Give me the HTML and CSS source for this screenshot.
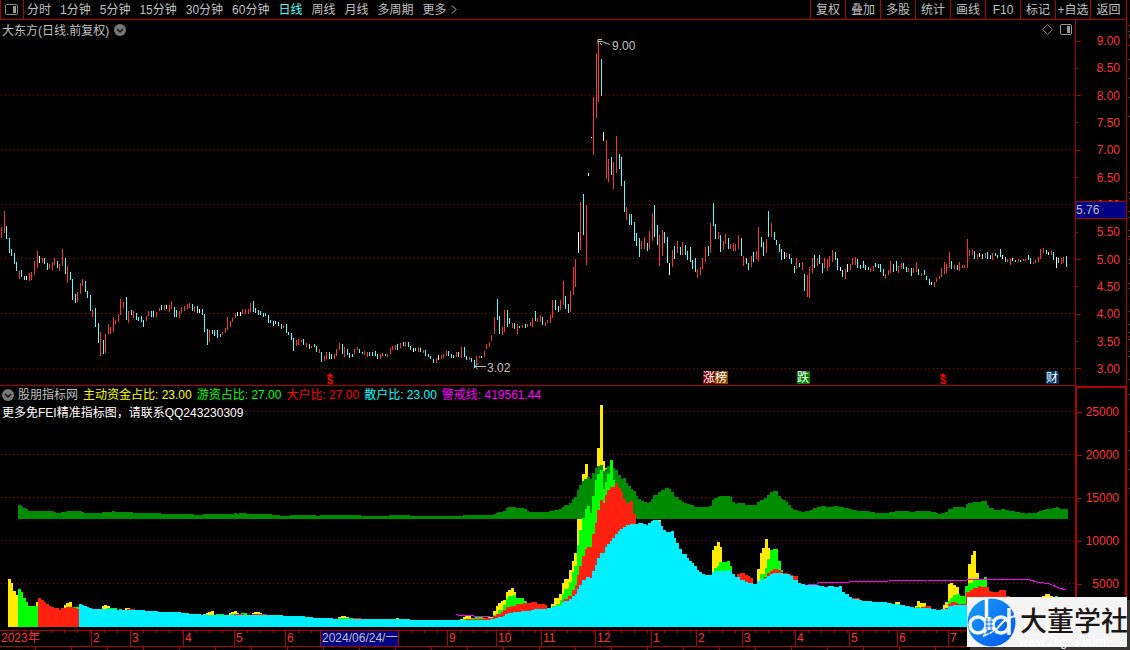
FILE: index.html
```html
<!DOCTYPE html>
<html lang="zh-CN">
<head>
<meta charset="UTF-8" />
<meta name="viewport" content="width=device-width, initial-scale=1" />
<title>大东方 日线</title>
<link rel="stylesheet" href="styles.css">
</head>
<body>

<div class="terminal">
  <header class="toolbar">
    <button class="panel-btn" aria-label="侧栏">
      <svg width="13" height="11" viewBox="0 0 13 11"><rect x=".5" y=".5" width="12" height="10" rx="1.5" fill="none" stroke="#888"/><path d="M8 2h3v7H8z" fill="#999"/></svg>
    </button>
    <nav class="periods">
      <button>分时</button>
      <button>1分钟</button>
      <button>5分钟</button>
      <button>15分钟</button>
      <button>30分钟</button>
      <button>60分钟</button>
      <button class="active">日线</button>
      <button>周线</button>
      <button>月线</button>
      <button>多周期</button>
      <button class="more">更多<svg width="6" height="9" viewBox="0 0 6 9"><path d="M1 .5l4 4-4 4" fill="none" stroke="#c0c0c0"/></svg></button>
    </nav>
    <div class="actions">
      <button>复权</button>
      <button>叠加</button>
      <button>多股</button>
      <button>统计</button>
      <button>画线</button>
      <button>F10</button>
      <button>标记</button>
      <button>+自选</button>
      <button>返回</button>
    </div>
  </header>

  <!-- price chart -->
  <section class="pane price">
    <svg id="price" class="plot" viewBox="0 20 1075 365" preserveAspectRatio="none"></svg>
    <div class="pane-head">
      <h1>大东方(日线.前复权)</h1>
      <button class="round" aria-label="展开"><svg width="12" height="12" viewBox="0 0 12 12"><circle cx="6" cy="6" r="6" fill="#777"/><path d="M3 5l3 3 3-3" fill="none" stroke="#111" stroke-width="1.5"/></svg></button>
      <span class="tools">
        <svg width="11" height="11" viewBox="0 0 11 11"><path d="M5.5.5l5 5-5 5-5-5z" fill="none" stroke="#888"/></svg>
        <svg width="12" height="11" viewBox="0 0 12 11"><rect x=".5" y=".5" width="11" height="10" rx="1.5" fill="none" stroke="#999"/><path d="M7 2h3v7H7z" fill="#999"/></svg>
      </span>
    </div>
  </section>
  <aside class="axis price-axis">
    <span>9.00</span>
    <span>8.50</span>
    <span>8.00</span>
    <span>7.50</span>
    <span>7.00</span>
    <span>6.50</span>
    <span>6.00</span>
    <span>5.50</span>
    <span>5.00</span>
    <span>4.50</span>
    <span>4.00</span>
    <span>3.50</span>
    <span>3.00</span>
    <b class="cursor-price">5.76</b>
  </aside>

  <!-- indicator -->
  <section class="pane volume">
    <svg id="volume" class="plot" viewBox="0 386 1075 244" preserveAspectRatio="none"></svg>
    <div class="pane-head legend">
      <p>
        <button class="round" aria-label="指标"><svg width="12" height="12" viewBox="0 0 12 12"><circle cx="6" cy="6" r="6" fill="#777"/><path d="M3 5l3 3 3-3" fill="none" stroke="#111" stroke-width="1.5"/></svg></button>
        <span>股朋指标网</span>
        <span class="yellow">主动资金占比: 23.00</span>
        <span class="lime">游资占比: 27.00</span>
        <span class="red">大户比: 27.00</span>
        <span class="cyan">散户比: 23.00</span>
        <span class="magenta">警戒线: 419561.44</span>
      </p>
      <p class="note">更多免FEI精准指标图，请联系QQ243230309</p>
    </div>
  </section>
  <aside class="axis volume-axis">
    <span>25000</span>
    <span>20000</span>
    <span>15000</span>
    <span>10000</span>
    <span>5000</span>
  </aside>

  <footer class="dates">
    <span>2023年</span>
    <span>2</span>
    <span>3</span>
    <span>4</span>
    <span>5</span>
    <span>6</span>
    <span class="cursor-date">2024/06/24/一</span>
    <span></span>
    <span>9</span>
    <span>10</span>
    <span>11</span>
    <span>12</span>
    <span>1</span>
    <span>2</span>
    <span>3</span>
    <span>4</span>
    <span>5</span>
    <span>6</span>
    <span>7</span>
    <span></span>
  </footer>

  <svg class="strip" viewBox="0 0 4 650" preserveAspectRatio="none" shape-rendering="crispEdges">
    <path d="M1 25.5h3M1 45.5h3M1 239.5h3M1 336.5h3" stroke="#b00000"/>
    <path d="M3.5 31v1m0 3v1m0 1v1m0 21v1m0 18v1m0 18v1m0 18v1m0 75v1m0 5v1m0 12v1m0 5v1m0 12v1m0 5v1m0 22v1m0 3v1m0 19v1m0 4v1m0 22v1m0 12v1m0 7v1m0 6v1m0 11v1m0 4v1m0 22v1m0 14v1m0 36v1m0 18v1m0 18v1m0 18v1" stroke="#aaa"/>
  </svg>

  <div class="below"></div>

  <div class="brand">
    <svg width="49" height="49" viewBox="0 0 49 49">
      <defs><linearGradient id="blue" x1="0" y1="0" x2="1" y2="1"><stop offset="0" stop-color="#1aa0f5"/><stop offset="1" stop-color="#0055f0"/></linearGradient></defs>
      <circle cx="24.500" cy="24.500" r="24" fill="url(#blue)"/>
      <g fill="none" stroke="#f4f8ff" stroke-width="3.500">
        <circle cx="11" cy="27" r="8"/>
        <path d="M19.500 1v26c0 4-1 6-3 8"/>
        <circle cx="34" cy="27" r="8"/>
        <path d="M42 10v27"/>
        <path d="M16 38c8-3 13-5 18-12 3-4 7-6 14-8" stroke-width="2"/>
        <path d="M20 39l8-6" stroke="#1674ef" stroke-width="1"/>
      </g>
      <path d="M18 24q0-5 4-5t4 5v8h-8z" fill="#f4f8ff"/>
      <path d="M18 24h8m-8 4h8m-6-8v12m4-12v12M22 32v7m-3-1h6" stroke="#1674ef"/>
    </svg>
    <strong>大董学社</strong>
    <i>www.zbgs3.com</i>
  </div>
</div>

<script src="chart.js"></script>
</body>
</html>
```
FILE: styles.css
```css
* {
  box-sizing: border-box;
}

body {
  margin: 0;
  background: #000;
  color: #c0c0c0;
  font-family: 'Liberation Sans', 'Noto Sans CJK SC', sans-serif;
  font-size: 12px;
}

button {
  background: none;
  border: none;
  padding: 0;
  color: inherit;
  font: inherit;
  white-space: nowrap;
  cursor: pointer;
}

svg {
  display: block;
}

h1, p {
  margin: 0;
  font-size: inherit;
  font-weight: normal;
}

.terminal {
  position: relative;
  display: grid;
  grid-template-columns: 1fr 51px 4px;
  grid-template-rows: 20px 366fr 245fr 16px 3px;
  height: 100vh;
  overflow: hidden;
}

/* toolbar */
.toolbar {
  grid-column: 1 / 3;
  display: flex;
  border-bottom: 1px solid #b00000;
  line-height: 18px;
}

.panel-btn {
  width: 24px;
  padding-left: 4px;
  border-left: 1px solid #b00000;
  border-right: 1px solid #b00000;
}

.periods {
  flex: 1;
  display: flex;
  gap: 9px;
  padding-left: 3px;
}

.periods .active {
  color: #54ffff;
}

.more {
  display: flex;
  align-items: center;
  gap: 4px;
}

.actions {
  display: flex;
}

.actions button {
  width: 35px;
  border-left: 1px solid #b00000;
}

.actions button:last-child {
  width: 36px;
}

/* panes */
.pane {
  position: relative;
  min-height: 0;
  border-bottom: 1px solid #b00000;
}

.plot {
  position: absolute;
  inset: 0;
  width: 100%;
  height: 100%;
}

.pane-head {
  position: relative;
  display: flex;
  align-items: center;
  gap: 5px;
  padding: 0 3px 0 2px;
  height: 19px;
}

.tools {
  display: flex;
  align-items: center;
  gap: 7px;
  margin-left: auto;
}

.legend {
  flex-direction: column;
  align-items: flex-start;
  gap: 0;
  height: auto;
  line-height: 18px;
}

.legend p {
  display: flex;
  align-items: center;
  gap: 5px;
  white-space: nowrap;
}

.legend .round {
  margin-right: -1px;
}

.legend .note {
  color: #fff;
}

.yellow { color: #ff0; }
.lime { color: #0f0; }
.red { color: #f00; }
.cyan { color: #0ff; }
.magenta { color: #f0f; }

/* value axes */
.axis {
  position: relative;
  display: flex;
  flex-direction: column;
  justify-content: space-between;
  border-left: 1px solid #b00000;
  color: #ff3232;
  line-height: 16px;
}

.axis span {
  display: flex;
  align-items: center;
  justify-content: space-between;
  padding-right: 6px;
}

.axis span::before {
  content: "";
  width: 5px;
  height: 1px;
  background: #b00000;
}

.price-axis {
  padding: 13px 0 9px;
}

.price-axis span:nth-child(even)::before {
  width: 2px;
}

.cursor-price {
  position: absolute;
  top: 49.500%;
  left: 0;
  right: 0;
  background: #000080;
  border-top: 1px solid #b00000;
  border-bottom: 1px solid #b00000;
  color: #c0c0c0;
  font-weight: normal;
}

.volume-axis {
  padding: 16px 0 38px;
  border: 2px solid #b00000;
  border-right-width: 1px;
  border-bottom-width: 1px;
}

/* dates */
.dates {
  grid-column: 1 / 3;
  display: grid;
  grid-template-columns: 92fr 39fr 53fr 51fr 51fr 35fr 78fr 49fr 49fr 45fr 54fr 56fr 45fr 46fr 53fr 54fr 48fr 51fr 51fr 126fr;
  border-bottom: 1px solid #b00000;
  color: #ff3232;
  line-height: 15px;
}

.dates span {
  padding-left: 1px;
  border-right: 1px solid #b00000;
  background: repeating-linear-gradient(90deg, transparent 0 12px, #b00000 12px 13px) 0 0 / 100% 2px no-repeat;
  white-space: nowrap;
  overflow: hidden;
}

.dates .cursor-date {
  background: #000080;
  color: #c0c0c0;
}

.strip {
  grid-area: 1 / 3 / 6 / 4;
  width: 100%;
  height: 100%;
  border-left: 1px solid #b00000;
}

.below {
  grid-column: 1 / 3;
  background: repeating-linear-gradient(90deg, transparent 0 35px, #b00000 35px 36px);
}

/* corner logo */
.brand {
  position: absolute;
  right: 3px;
  bottom: 3px;
  display: flex;
  align-items: center;
  gap: 4px;
  width: 160px;
  height: 50px;
  background: #f4f4f4;
  box-shadow: 3px 3px #383434;
  color: #1c1616;
}

.brand svg {
  flex: none;
}

.brand strong {
  font-size: 27px;
  font-weight: 500;
  line-height: 28px;
  white-space: nowrap;
}

.brand i {
  position: absolute;
  left: 52px;
  bottom: 0;
  color: #fff;
  font-size: 12px;
  font-style: normal;
  line-height: 10px;
}
```
FILE: chart.js
```js
const NS = 'http://www.w3.org/2000/svg';
const priceSvg = document.getElementById('price');
const volumeSvg = document.getElementById('volume');

function add(parent, tag, attrs, text) {
  const el = document.createElementNS(NS, tag);
  for (const key in attrs) el.setAttribute(key, attrs[key]);
  if (text) el.textContent = text;
  parent.appendChild(el);
}

function grid(svg, rows) {
  rows.forEach(y => add(svg, 'path', {
    d: `M1 ${y + 0.5}H1075`, stroke: '#b00000', 'stroke-dasharray': '1 3', 'shape-rendering': 'crispEdges'
  }));
}

// x, high, low, colour (r up, c down, w flat)
const candles = `
1 227 238 r,4 211 233 r,6 226 239 c,9 238 253 c,11 249 256 c,14 253 264 c,16 262 271 c,19 271 279 r,21 270 277 c,24 276 280 c,
26 276 280 w,29 273 281 r,31 272 280 r,34 261 275 r,37 251 268 r,39 256 263 w,42 258 263 r,44 258 264 c,47 263 270 c,49 264 269 r,
52 262 270 r,54 258 265 r,57 261 268 c,59 264 271 r,62 249 266 r,65 258 274 c,67 266 283 r,70 272 280 c,72 279 300 c,75 294 303 c,
77 292 302 r,80 283 294 r,82 279 286 r,85 281 292 c,87 291 298 c,90 295 311 c,92 310 317 r,95 308 327 c,98 323 343 c,100 332 356 r,
103 340 354 c,105 334 353 r,108 324 334 r,110 327 334 r,113 317 332 r,115 320 324 r,118 314 322 r,120 299 315 r,123 302 308 r,
126 297 320 c,128 311 323 r,131 310 315 c,133 311 318 r,136 313 320 c,138 317 321 c,141 316 322 c,143 320 327 c,146 316 321 r,
148 311 316 r,151 311 317 c,153 311 317 c,156 312 317 r,159 308 311 r,161 305 310 c,164 305 310 r,166 305 309 w,169 305 312 r,
171 301 309 r,174 307 317 c,176 310 317 c,179 311 318 r,181 307 313 r,184 306 311 r,187 304 309 r,189 303 308 r,192 304 311 c,
194 306 312 r,197 306 313 c,199 309 313 w,202 309 315 c,204 314 332 c,207 329 345 c,209 330 342 r,212 330 334 c,214 330 336 c,
217 330 338 c,220 334 337 c,222 332 335 r,225 328 333 r,227 317 330 r,230 321 327 r,232 318 322 r,235 313 318 r,237 312 316 w,
240 312 316 w,242 309 314 r,245 309 314 r,248 309 314 r,250 303 312 r,253 301 312 c,255 308 313 c,258 310 315 c,260 311 315 c,
263 313 317 c,265 313 316 c,268 315 323 c,270 320 323 c,273 321 326 c,275 321 324 c,278 322 326 c,281 324 329 c,283 325 328 r,
286 324 333 c,288 332 335 c,291 333 340 c,293 338 351 c,296 340 346 r,298 339 345 r,301 340 342 r,303 339 345 c,306 343 347 r,
309 344 349 c,311 346 348 r,314 344 347 c,316 346 352 c,319 349 353 r,321 352 362 c,324 356 361 r,326 352 359 r,329 352 359 c,
331 354 359 c,334 354 359 r,336 349 356 r,339 343 350 r,342 344 354 c,344 347 357 r,347 349 355 c,349 353 358 c,352 354 357 c,
354 349 354 r,357 347 350 r,359 349 353 c,362 352 354 c,364 351 355 r,367 352 357 r,369 352 356 c,372 352 356 c,375 351 356 c,
377 354 359 c,380 354 359 r,382 353 356 r,385 354 356 c,387 354 357 r,390 348 354 r,392 346 350 r,395 345 350 r,397 344 350 c,
400 343 348 r,403 342 346 c,405 342 347 r,408 342 347 c,410 346 350 c,413 348 352 w,415 348 351 c,418 347 352 r,420 348 352 c,
423 350 353 r,425 350 356 c,428 354 357 c,430 356 359 c,433 359 363 c,436 358 363 r,438 355 360 w,441 355 359 r,443 354 358 r,
446 351 356 r,448 351 356 c,451 354 358 c,453 355 358 c,456 352 357 r,458 352 357 c,461 347 358 r,464 347 357 c,466 356 360 c,
469 357 360 r,471 358 362 c,474 360 368 c,476 356 365 r,479 356 358 r,481 356 358 w,484 351 357 r,486 344 349 r,489 342 347 r,
491 335 341 r,494 317 334 r,497 299 320 c,499 316 334 c,502 327 335 r,504 310 332 r,507 310 327 c,509 318 324 c,512 323 328 r,
514 323 329 c,517 324 334 r,519 326 328 c,522 325 328 r,525 324 328 c,527 324 327 r,530 322 326 r,532 318 327 r,535 311 321 c,
537 318 322 r,540 315 322 r,542 317 325 c,545 322 326 r,547 320 323 r,550 315 323 r,552 300 318 r,555 300 310 c,558 306 312 c,
560 300 310 r,563 281 305 r,565 296 309 c,568 304 313 c,570 291 312 r,573 267 295 r,575 259 287 r,578 232 253 w,580 202 250 r,
583 194 235 c,586 205 265 r,588 173 176 w,591 137 138 w,593 97 155 r,596 53 118 r,598 43 102 r,601 59 96 c,603 132 141 w,
606 140 179 r,608 159 182 r,611 157 175 c,613 162 189 r,616 136 173 r,619 154 169 c,621 157 186 c,624 181 212 c,626 207 220 r,
629 214 225 c,631 214 225 c,634 222 241 c,636 233 246 c,639 238 257 c,641 241 249 r,644 237 249 r,647 243 251 c,649 231 249 r,
652 213 241 r,654 205 237 c,657 225 245 c,659 235 266 r,662 230 256 r,664 232 243 c,667 237 263 c,669 263 275 w,672 250 267 r,
674 246 259 c,677 241 253 r,680 247 255 c,682 242 255 r,685 245 255 c,687 251 260 c,690 247 262 c,692 260 269 c,695 258 272 c,
697 269 278 r,700 267 275 r,702 258 269 r,705 247 262 r,708 246 256 c,710 223 253 r,713 203 226 c,715 224 239 c,718 232 239 r,
720 235 252 c,723 241 250 r,725 234 244 r,728 238 249 c,730 244 249 r,733 243 251 r,735 244 251 r,738 235 249 r,741 238 256 c,
743 256 266 r,746 258 264 c,748 263 270 c,751 256 267 r,753 252 262 c,756 251 259 r,758 227 261 r,761 237 247 c,763 242 256 c,
766 239 253 r,768 211 237 c,771 223 237 r,774 232 240 c,776 240 245 c,779 244 252 c,781 249 260 c,784 252 259 w,786 253 257 r,
789 254 259 c,791 258 264 c,794 266 273 c,796 258 269 r,799 263 267 c,802 262 270 r,804 274 291 c,807 275 297 r,809 267 298 r,
812 258 273 r,814 255 268 c,817 258 266 r,819 255 264 c,822 263 273 c,824 258 268 r,827 259 271 r,829 256 267 r,832 250 262 r,
835 252 260 c,837 258 270 c,840 267 271 w,842 270 277 c,845 269 279 r,847 264 272 w,850 264 270 r,852 258 265 r,855 257 265 r,
857 259 268 c,860 265 269 c,863 261 268 c,865 265 270 c,868 267 270 c,870 268 272 r,873 266 271 r,875 263 267 c,878 264 268 c,
880 264 272 c,883 269 276 c,885 274 278 r,888 270 275 r,890 261 273 r,893 264 272 c,896 261 271 c,898 266 273 r,901 263 269 r,
903 263 269 c,906 267 272 c,908 268 272 r,911 268 276 c,913 268 273 r,916 262 272 r,918 269 275 c,921 273 276 r,924 270 275 c,
926 276 280 c,929 279 285 c,931 282 285 w,934 282 287 r,936 278 282 r,939 276 279 r,941 268 277 r,944 262 274 r,946 264 273 r,
949 252 268 r,951 261 269 c,954 265 269 r,957 265 270 c,959 262 271 r,962 265 268 r,964 265 268 r,967 239 268 r,969 250 256 r,
972 250 255 r,974 251 259 c,977 254 259 r,979 253 257 w,982 254 259 c,985 253 258 r,987 252 259 c,990 255 259 c,992 253 260 r,
995 253 256 c,997 255 258 c,1000 249 257 c,1002 255 259 w,1005 257 262 c,1007 259 262 r,1010 259 265 r,1012 258 261 w,
1015 260 262 c,1018 259 262 r,1020 260 262 c,1023 259 261 r,1025 259 261 r,1028 255 260 c,1030 258 264 c,1033 262 264 r,
1035 260 263 r,1038 257 262 r,1040 249 259 r,1043 248 253 r,1046 250 254 c,1048 252 255 w,1051 250 255 r,1053 252 260 c,
1056 257 268 w,1058 258 263 c,1061 258 264 r,1063 257 263 r,1066 256 267 c`;

const candleColors = { r: '#ff3232', c: '#54ffff', w: '#ffffff' };

grid(priceSvg, [95, 149, 204, 258, 313, 368]);
candles.split(',').forEach(row => {
  const [x, high, low, color] = row.trim().split(' ');
  add(priceSvg, 'rect', { x, y: high, width: 1, height: low - high, fill: candleColors[color], 'shape-rendering': 'crispEdges' });
});

// high / low callouts
add(priceSvg, 'path', { d: 'M602 39.5h-4v4M598 41.5h4l8 3M600 43l2 2', fill: 'none', stroke: '#c0c0c0' });
add(priceSvg, 'text', { x: 612, y: 50, fill: '#c0c0c0' }, '9.00');
add(priceSvg, 'path', { d: 'M486 366.5H475M478 363.5l-3 3 3 3', fill: 'none', stroke: '#c0c0c0' });
add(priceSvg, 'text', { x: 487, y: 372, fill: '#c0c0c0' }, '3.02');

// event badges
[[703, '涨', '#800000'], [715, '榜', '#884400'], [797, '跌', '#008000'], [1046, '财', '#003366']].forEach(([x, label, fill]) => {
  add(priceSvg, 'rect', { x, y: 371, width: 13, height: 13, fill });
  add(priceSvg, 'text', { x, y: 382, fill: '#fff' }, label);
});
[330, 943].forEach(x => {
  add(priceSvg, 'path', { d: `M${x - 3} 376l3-3 3 3z`, fill: '#f00' });
  add(priceSvg, 'text', { x, y: 384, fill: '#f00', 'text-anchor': 'middle', 'font-size': 10, 'font-weight': 'bold' }, 'S');
});

// each run: "x y x y ... endX", stepped and closed on the base line
function steps(runs, base, fill) {
  runs.forEach(run => {
    const n = run.split(' ').map(Number);
    let d = `M${n[0]} ${base}`;
    for (let i = 0; i < n.length - 1; i += 2) d += `H${n[i]}V${n[i + 1]}`;
    d += `H${n[n.length - 1]}V${base}Z`;
    add(volumeSvg, 'path', { d, fill, 'shape-rendering': 'crispEdges' });
  });
}

grid(volumeSvg, [411, 454, 497, 540, 583]);

steps([
  '8 579 11 583 13 591 16 595 18', '36 602 38', '64 605 66 603 69 602 72', '102 606 104 605 107 606 110', '125 608 130',
  '206 613 208 612 211 611 214', '229 613 231 612 234 611 237 613 239', '252 613 254 612 260 613 262',
  '338 617 341 616 346 617 349', '396 618 399', '460 619 463 617 465 616 471',
  '488 617 493 611 496 606 498 603 501 601 503 600 506 592 508 590 511 588 514 592 516',
  '551 604 554 598 559 594 562 583 564 579 569 570 572 561 574 553 577 500 582 474 585 464 588',
  '597 448 600 405 603 461 605 468 607', '658 520 661', '712 550 714 546 717 542 720 547 722',
  '757 569 760 553 762 548 765 539 768 548 770 550 773', '895 602 900', '915 606 917 601 920 603 926',
  '943 605 945 602 948 584 950 583 953 585 956 587 959', '968 564 971 555 973 551 976 573 979', '1042 596 1045 594 1050 596 1053'
], 627, '#ffea00');

steps([
  '18 505 21 506 23 508 26 509 28 511 54 512 56 513 61 512 66 511 82 512 84 513 102 512 112 511 115 512 133 513 161 514 194 515 203 514 234 513 237 514 239 513 247 514 272 515 280 516 290 515 316 516 320 515 361 516 389 515 410 516 463 515 493 514 496 513 498 512 503 511 506 508 508 507 516 508 524 509 527 511 529 512 549 511 554 510 559 509 562 507 564 505 569 503 572 499 574 497 577 490 579 485 582 481 584 479 587 477 590 479 592 473 595 468 597 466 600 465 603 471 605 469 607 466 613 468 615 470 618 475 621 479 623 478 626 483 628 486 631 489 633 491 636 496 638 499 641 501 644 502 647 503 649 502 651 499 653 495 658 492 661 490 665 488 669 489 671 492 674 497 679 500 682 502 684 503 687 504 690 505 694 507 709 506 712 500 714 498 717 497 719 496 730 497 732 502 735 504 737 503 745 505 757 502 760 500 764 498 767 495 770 492 773 491 778 496 781 499 783 500 786 502 788 505 791 508 793 510 798 511 801 512 805 511 810 510 813 508 817 507 821 506 826 507 834 506 839 507 844 508 849 509 852 510 857 511 870 512 875 513 889 512 895 511 910 512 915 511 931 512 936 513 938 514 941 513 945 512 948 509 953 507 964 508 966 504 968 503 973 502 981 501 987 505 989 508 994 510 1001 509 1005 510 1009 511 1015 512 1020 513 1026 514 1027 513 1037 512 1039 511 1042 510 1045 509 1052 508 1056 507 1058 508 1060 509 1068'
], 519, '#008c00');

steps([
  '18 589 21 592 23 598 26 602 28 606 38', '74 607 79', '107 608 117', '119 609 122', '216 614 224', '231 614 241 613 247', '338 618 353',
  '463 619 471 618 475 617 483 618 493 615 498 610 503 605 506 599 508 596 513 595 516 598 524 601 527',
  '552 606 556 604 560 600 562 594 564 589 569 582 572 572 574 566 577 545 579 530 582 518 585 509 587 506 590 513 592 496 595 480 597 474 600 470 603 489 605 482 607 474 610 460 613 480 615',
  '714 568 717 566 719 562 727 561 730 566 732', '760 574 765 568 767 559 770 550 773 549 778 561 781 570 783',
  '916 607 920', '948 601 950 598 953 595 957 594 960 596 965 586 968 583 973 580 978 579 984 577 987 593 1000', '1055 596 1058'
], 627, '#00ff00');

steps([
  '38 598 41 600 44 602 46 604 49 606 51 607 54 608 59 610 61 608 66 607 74 608 77 609 79', '127 609 135', '234 614 244', '252 614 267', '353 618 361',
  '466 619 485 618 493 616 496 614 501 612 503 610 506 607 511 606 516 604 523 603 531 602 537 604 545 605 547',
  '562 601 564 599 568 596 572 590 575 585 577 575 579 566 582 556 585 549 587 547 592 534 595 523 597 510 600 500 603 503 605 495 607 490 610 487 615 483 618 488 621 492 623 499 626 503 630 501 633 514 636',
  '737 574 740 573 745 575 748 576 750 578 753', '764 577 767 573 770 571 773 569 778 570 781 572 783 573 788 574 791 575 793 576 798',
  '852 598 860', '921 607 925 606 931', '941 609 945 608 948 604 951 602 956 603 958 604 966 592 970 590 973 588 978 586 981 587 989 591 991 592 999 590 1006 596 1010'
], 627, '#ff2010');

steps([
  '79 604 82 605 84 606 87 607 89 608 92 609 117 610 145 611 158 612 181 613 189 614 201 615 203 614 206 615 283 616 305 617 313 618 333 619 410 620 490 619 495 618 498 617 503 616 505 614 508 613 513 612 521 611 531 610 534 609 547 608 552 607 555 606 560 605 562 602 564 601 569 599 572 596 575 594 577 589 579 585 582 580 586 577 590 578 592 571 595 565 597 558 600 553 605 547 607 544 610 541 612 538 615 534 618 531 620 529 623 527 626 525 630 524 638 523 643 524 646 525 648 523 651 521 653 520 658 521 661 526 663 530 666 532 671 531 674 538 676 543 679 549 682 554 687 558 689 561 692 563 694 566 697 570 699 572 702 574 705 575 712 572 715 571 727 570 730 571 732 574 735 577 740 580 745 582 748 583 753 584 757 581 760 579 765 578 767 576 770 574 773 573 783 574 790 576 793 580 798 583 801 584 805 585 819 586 824 587 828 586 834 587 839 586 842 592 845 594 849 597 852 599 859 600 862 601 872 602 887 603 892 604 900 605 905 606 910 607 914 608 931 609 936 610 941 609 948 606 953 605 1068'
], 627, '#00f0ff');

// warning line
['456,614 458,615 473,615 474,616 490,616', '808,584 817,584 818,583 849,582 889,581 928,580 967,580 968,579 1020,579 1030,580 1037,582 1050,584 1059,588 1066,590'].forEach(points =>
  add(volumeSvg, 'polyline', { points, fill: 'none', stroke: '#ff00ff', 'shape-rendering': 'crispEdges' }));
```
